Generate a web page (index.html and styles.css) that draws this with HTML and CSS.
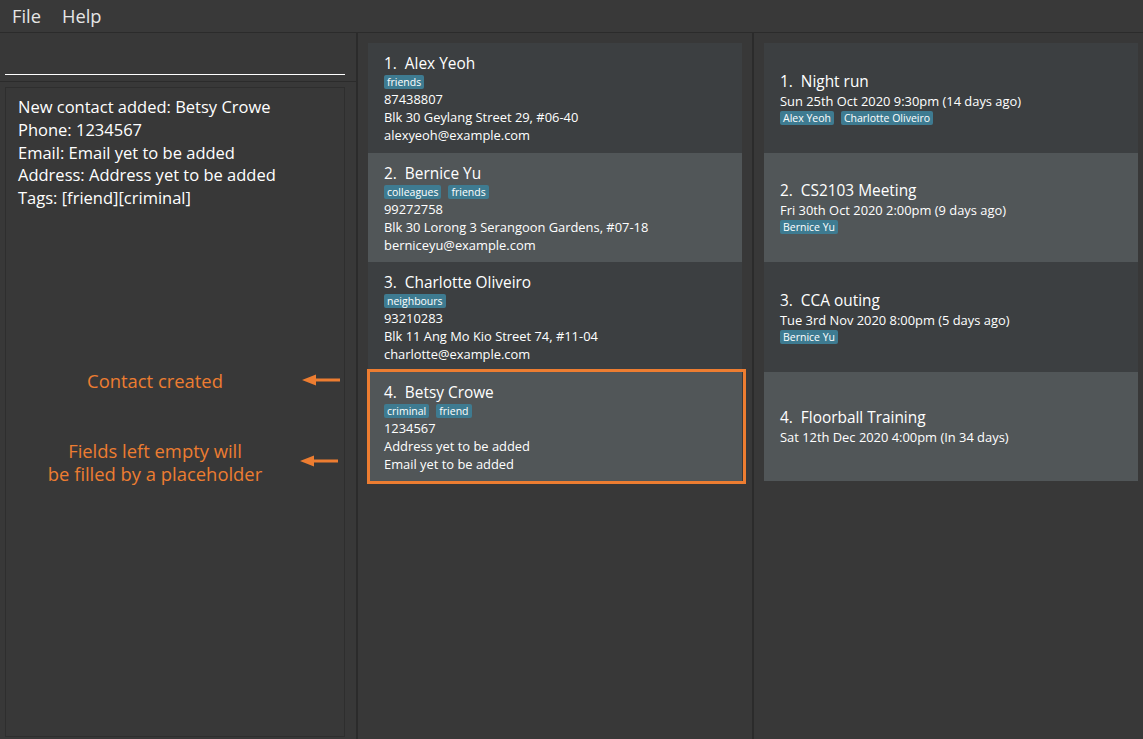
FILE: index.html
```html
<!DOCTYPE html>
<html>
<head>
<meta charset="utf-8">
<link rel="stylesheet" href="styles.css">
</head>
<body>
<div class="menubar">
  <span class="menu-item">File</span>
  <span class="menu-item">Help</span>
</div>
<div class="main">
  <div class="left">
    <div class="command"><div class="command-line"></div></div>
    <div class="result-wrap">
      <div class="result">
        <div>New contact added: Betsy Crowe</div>
        <div>Phone: 1234567</div>
        <div>Email: Email yet to be added</div>
        <div>Address: Address yet to be added</div>
        <div>Tags: [friend][criminal]</div>
      </div>
      <div class="note note-1">Contact created</div>
      <div class="note note-2">Fields left empty will<br>be filled by a placeholder</div>
      <svg class="arrow arrow-1" width="40" height="12" viewBox="0 0 40 12"><path d="M0 6 L14 0.5 L14 4.5 L38 4.5 L38 7.5 L14 7.5 L14 11.5 Z" fill="#ed7d31"/></svg>
      <svg class="arrow arrow-2" width="40" height="12" viewBox="0 0 40 12"><path d="M0 6 L14 0.5 L14 4.5 L38 4.5 L38 7.5 L14 7.5 L14 11.5 Z" fill="#ed7d31"/></svg>
    </div>
  </div>
  <div class="middle">
    <div class="card dark">
      <div class="title">1.&nbsp;&nbsp;Alex Yeoh</div>
      <div class="tags"><span class="tag">friends</span></div>
      <div class="line">87438807</div>
      <div class="line">Blk 30 Geylang Street 29, #06-40</div>
      <div class="line">alexyeoh@example.com</div>
    </div>
    <div class="card light">
      <div class="title">2.&nbsp;&nbsp;Bernice Yu</div>
      <div class="tags"><span class="tag">colleagues</span><span class="tag">friends</span></div>
      <div class="line">99272758</div>
      <div class="line">Blk 30 Lorong 3 Serangoon Gardens, #07-18</div>
      <div class="line">berniceyu@example.com</div>
    </div>
    <div class="card dark">
      <div class="title">3.&nbsp;&nbsp;Charlotte Oliveiro</div>
      <div class="tags"><span class="tag">neighbours</span></div>
      <div class="line">93210283</div>
      <div class="line">Blk 11 Ang Mo Kio Street 74, #11-04</div>
      <div class="line">charlotte@example.com</div>
    </div>
    <div class="card light highlighted">
      <div class="title">4.&nbsp;&nbsp;Betsy Crowe</div>
      <div class="tags"><span class="tag">criminal</span><span class="tag">friend</span></div>
      <div class="line">1234567</div>
      <div class="line">Address yet to be added</div>
      <div class="line">Email yet to be added</div>
    </div>
  </div>
  <div class="right">
    <div class="card event dark">
      <div class="title">1.&nbsp;&nbsp;Night run</div>
      <div class="line">Sun 25th Oct 2020 9:30pm (14 days ago)</div>
      <div class="tags"><span class="tag">Alex Yeoh</span><span class="tag">Charlotte Oliveiro</span></div>
    </div>
    <div class="card event light">
      <div class="title">2.&nbsp;&nbsp;CS2103 Meeting</div>
      <div class="line">Fri 30th Oct 2020 2:00pm (9 days ago)</div>
      <div class="tags"><span class="tag">Bernice Yu</span></div>
    </div>
    <div class="card event dark">
      <div class="title">3.&nbsp;&nbsp;CCA outing</div>
      <div class="line">Tue 3rd Nov 2020 8:00pm (5 days ago)</div>
      <div class="tags"><span class="tag">Bernice Yu</span></div>
    </div>
    <div class="card event light">
      <div class="title">4.&nbsp;&nbsp;Floorball Training</div>
      <div class="line">Sat 12th Dec 2020 4:00pm (In 34 days)</div>
    </div>
  </div>
</div>
</body>
</html>
```
FILE: styles.css
```css
* { box-sizing: border-box; }
html, body { margin: 0; padding: 0; }
body {
  width: 1143px;
  height: 739px;
  overflow: hidden;
  background: #383838;
  font-family: "Open Sans", "Noto Sans", sans-serif;
  color: #ffffff;
}
.menubar {
  height: 33px;
  border-bottom: 1px solid #2b2b2b;
  display: flex;
  align-items: center;
  padding-left: 12px;
  gap: 21px;
  background: #393939;
}
.menu-item {
  font-size: 18.3px;
  color: #e6e6e6;
  line-height: 30px;
}
.main {
  display: flex;
  height: 706px;
}
.left {
  width: 358px;
  border-right: 2px solid #2b2b2b;
  display: flex;
  flex-direction: column;
}
.command {
  height: 49px;
  border-bottom: 1px solid #2b2b2b;
  padding: 0 11px 0 5px;
  display: flex;
  align-items: flex-end;
  padding-bottom: 6px;
}
.command-line {
  height: 1px;
  width: 100%;
  background: #ffffff;
}
.result-wrap {
  position: relative;
  flex: 1;
  padding: 5px 11px 2px 5px;
  display: flex;
}
.result {
  flex: 1;
  border: 1px solid #2e2e2e;
  padding: 8px 12px;
  font-size: 16.5px;
  line-height: 22.8px;
  color: #ffffff;
}
.note {
  position: absolute;
  left: 0;
  width: 310px;
  text-align: center;
  color: #ed7d31;
  font-size: 18.4px;
  line-height: 23px;
}
.note-1 { top: 287px; }
.note-2 { top: 357px; }
.arrow { position: absolute; }
.arrow-1 { left: 302px; top: 292px; }
.arrow-2 { left: 300px; top: 373px; }
.middle {
  width: 396px;
  border-right: 2px solid #2b2b2b;
  padding: 10px 10px 0 10px;
}
.right {
  flex: 1;
  padding: 10px 5px 0 10px;
}
.card {
  height: 109.5px;
  padding: 10px 16px 0 16px;
  position: relative;
}
.dark { background: #3c3f41; }
.light { background: #515658; }
.title {
  font-size: 15.4px;
  line-height: 21px;
  color: #ffffff;
}
.tags {
  display: flex;
  gap: 7px;
  height: 14px;
  margin: 1px 0 1px;
}
.tag {
  background: #3e7b91;
  color: #ffffff;
  font-size: 10.5px;
  line-height: 14px;
  padding: 0 3px;
  border-radius: 2px;
}
.line {
  font-size: 12.9px;
  line-height: 18px;
  color: #ffffff;
}
.event {
  display: flex;
  flex-direction: column;
  justify-content: center;
  padding-top: 0;
}
.event .tags { margin: 1px 0 0; }
.highlighted::after {
  content: "";
  position: absolute;
  left: -1px;
  right: -4px;
  top: -3px;
  bottom: -3px;
  border: 3px solid #ed7d31;
}
```
